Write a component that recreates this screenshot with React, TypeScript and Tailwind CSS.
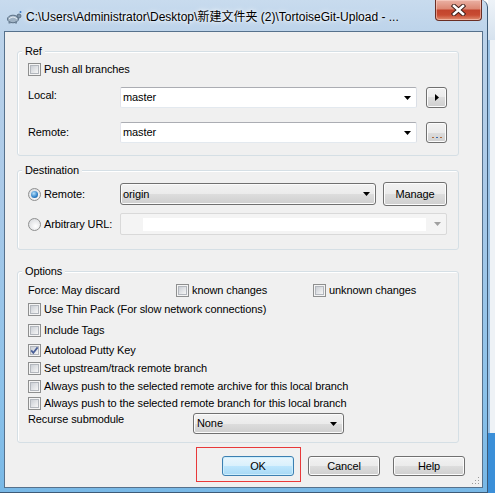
import React from "react";

function CheckBox({ checked }: { checked?: boolean }) {
  return (
    <span className="relative flex h-[13px] w-[13px] shrink-0 items-center justify-center border border-[#8e8f8f] bg-[#f4f4f4]">
      <span className="h-[9px] w-[9px] border border-[#b3b7bd] bg-[linear-gradient(135deg,#cbcfd5,#f6f6f6)]" />
      {checked && (
        <svg className="absolute left-0 top-0" width="11" height="11" viewBox="0 0 11 11">
          <path d="M2.2 5.4 L4.3 7.8 L8.6 2.4" fill="none" stroke="#4a5f97" strokeWidth="1.7" />
        </svg>
      )}
    </span>
  );
}

function Radio({ checked }: { checked?: boolean }) {
  return (
    <span className="flex h-[13px] w-[13px] shrink-0 items-center justify-center rounded-full border border-[#8e8f8f] bg-[radial-gradient(circle_at_60%_65%,#ffffff,#d2d4d8)]">
      {checked && (
        <span className="h-[7px] w-[7px] rounded-full bg-[radial-gradient(circle_at_40%_35%,#b8e2fb,#2d7fc7_60%,#1c4f88)]" />
      )}
    </span>
  );
}

function Arrow({ color = "#000" }: { color?: string }) {
  return (
    <svg width="7" height="4" viewBox="0 0 7 4">
      <polygon points="0,0 7,0 3.5,4" fill={color} />
    </svg>
  );
}

function Button({ children, className = "" }: { children?: React.ReactNode; className?: string }) {
  return (
    <div
      className={
        "flex shrink-0 items-center justify-center rounded-[3px] border border-[#707070] bg-[linear-gradient(#f2f2f2,#ebebeb_50%,#dddddd_50%,#cfcfcf)] shadow-[inset_0_0_0_1px_#fcfcfc] " +
        className
      }
    >
      {children}
    </div>
  );
}

function Legend({ children }: { children: React.ReactNode }) {
  return (
    <span className="absolute -top-[7px] left-[4px] bg-[#f0f0f0] px-[3px] leading-[13px]">{children}</span>
  );
}

function CheckRow({ label, checked, className = "" }: { label: string; checked?: boolean; className?: string }) {
  return (
    <div className={"flex h-[16px] items-center " + className}>
      <CheckBox checked={checked} />
      <span className="ml-[3px] whitespace-nowrap">{label}</span>
    </div>
  );
}

export default function App() {
  return (
    <div className="flex h-[495px] w-[495px] flex-col overflow-hidden bg-white font-['Liberation_Sans',Arial,'Noto_Sans_CJK_SC',sans-serif] text-[11px] leading-[13px] tracking-[-0.1px] text-black">
      <div className="flex h-[493px]">
        {/* window */}
        <div className="relative flex h-[493px] w-[488px] shrink-0 flex-col rounded-tr-[7px] border-b border-r border-[#3d5b78] bg-[linear-gradient(180deg,#c8dbee_0%,#bcd3ea_7%,#a9c9e8_40%,#8cc2ea_80%,#78b8e6_100%)]">
          {/* title bar */}
          <div className="flex h-[31px] shrink-0">
            <div className="ml-[6px] mt-[10px] h-[15px] w-[16px]">
              <svg width="16" height="15" viewBox="0 0 16 15">
                <ellipse cx="7" cy="9" rx="5.5" ry="3.8" fill="#9fb2c4" stroke="#5a6f84" strokeWidth="1" />
                <path d="M3 9 Q7 5 11 9" fill="none" stroke="#e8eef4" strokeWidth="1" />
                <circle cx="13" cy="6" r="2" fill="#7e93a8" stroke="#4f6479" strokeWidth="0.8" />
                <rect x="2.5" y="11.5" width="2" height="2" fill="#6d8297" />
                <rect x="9" y="11.5" width="2" height="2" fill="#6d8297" />
                <circle cx="14.5" cy="2" r="1" fill="#3e7cc4" />
              </svg>
            </div>
            <div className="ml-[4px] mt-[9px] whitespace-nowrap text-[12px] leading-[16px] tracking-normal text-black [text-shadow:0_0_6px_#ffffff,0_0_3px_#ffffff]">
              C:\Users\Administrator\Desktop\新建文件夹 (2)\TortoiseGit-Upload - ...
            </div>
            <div className="ml-auto mr-[5px] flex h-[21px] w-[47px] items-center justify-center rounded-b-[4px] border border-t-0 border-[#6a2e24] bg-[linear-gradient(180deg,#eab1a4_0%,#dc8773_45%,#c2442d_50%,#c84b32_75%,#e08d70_100%)] shadow-[inset_0_0_0_1px_rgba(255,220,210,0.5)]">
              <svg width="15" height="12" viewBox="0 0 15 12">
                <path d="M3 2 L12 10 M12 2 L3 10" stroke="#3b1c17" strokeWidth="4.4" strokeLinecap="square" />
                <path d="M3 2 L12 10 M12 2 L3 10" stroke="#ffffff" strokeWidth="2.6" strokeLinecap="square" />
              </svg>
            </div>
          </div>

          {/* client */}
          <div className="relative ml-[4px] flex h-[457px] w-[479px] flex-col border border-[#56718c] bg-[#f0f0f0]">
            {/* Ref */}
            <div className="relative ml-[12px] mt-[19px] flex h-[105px] w-[442px] shrink-0 flex-col rounded-[3px] border border-[#d5dfe5] pl-[10px] pt-[11px] shadow-[inset_1px_1px_0_#ffffff]">
              <Legend>Ref</Legend>
              <div className="flex h-[13px] items-center">
                <CheckBox />
                <span className="ml-[3px]">Push all branches</span>
              </div>
              <div className="mt-[11px] flex h-[21px] items-center">
                <span className="w-[92px] pb-[4px]">Local:</span>
                <div className="flex h-[21px] w-[297px] items-center rounded-[2px] border border-[#abadb3] border-b-[#e3e9ef] border-l-[#e2e3ea] border-r-[#dbdfe6] bg-white pl-[2px]">
                  <span>master</span>
                  <span className="ml-auto mr-[5px] flex items-center">
                    <Arrow />
                  </span>
                </div>
                <Button className="ml-[9px] h-[21px] w-[21px]">
                  <svg width="4" height="7" viewBox="0 0 4 7">
                    <polygon points="0,0 4,3.5 0,7" fill="#000" />
                  </svg>
                </Button>
              </div>
              <div className="mt-[14px] flex h-[21px] items-center">
                <span className="w-[92px]">Remote:</span>
                <div className="flex h-[21px] w-[297px] items-center rounded-[2px] border border-[#abadb3] border-b-[#e3e9ef] border-l-[#e2e3ea] border-r-[#dbdfe6] bg-white pl-[2px]">
                  <span>master</span>
                  <span className="ml-auto mr-[5px] flex items-center">
                    <Arrow />
                  </span>
                </div>
                <Button className="ml-[9px] h-[21px] w-[21px] items-end pb-[4px]">
                  <span className="flex gap-[2px]">
                    <span className="h-[1px] w-[2px] bg-[#b06a3a]" />
                    <span className="h-[1px] w-[2px] bg-[#3a6ab0]" />
                    <span className="h-[1px] w-[2px] bg-[#b06a3a]" />
                  </span>
                </Button>
              </div>
            </div>

            {/* Destination */}
            <div className="relative ml-[12px] mt-[14px] flex h-[80px] w-[442px] shrink-0 flex-col rounded-[3px] border border-[#d5dfe5] pl-[10px] pt-[11px] shadow-[inset_1px_1px_0_#ffffff]">
              <Legend>Destination</Legend>
              <div className="flex h-[24px] items-center">
                <div className="flex w-[92px] items-center">
                  <Radio checked />
                  <span className="ml-[3px]">Remote:</span>
                </div>
                <div className="flex h-[22px] w-[256px] items-center rounded-[3px] border border-[#707070] bg-[linear-gradient(#f2f2f2,#ebebeb_50%,#dddddd_50%,#cfcfcf)] pl-[2px] shadow-[inset_0_0_0_1px_#fbfbfb]">
                  <span>origin</span>
                  <span className="ml-auto mr-[5px] flex items-center">
                    <Arrow />
                  </span>
                </div>
                <Button className="ml-[7px] h-[24px] w-[64px]">Manage</Button>
              </div>
              <div className="mt-[7px] flex h-[22px] items-center">
                <div className="flex w-[92px] items-center">
                  <Radio />
                  <span className="ml-[3px]">Arbitrary URL:</span>
                </div>
                <div className="flex h-[22px] w-[327px] items-center rounded-[2px] border border-[#d9d9d9] bg-[#f4f4f4]">
                  <span className="ml-[22px] h-[13px] w-[283px] bg-white" />
                  <span className="ml-auto mr-[5px] flex items-center">
                    <Arrow color="#a0a0a0" />
                  </span>
                </div>
              </div>
            </div>

            {/* Options */}
            <div className="relative ml-[12px] mt-[21px] flex h-[172px] w-[442px] shrink-0 flex-col rounded-[3px] border border-[#d5dfe5] pl-[10px] pt-[10px] shadow-[inset_1px_1px_0_#ffffff]">
              <Legend>Options</Legend>
              <div className="flex h-[16px] items-center">
                <span className="w-[148px]">Force: May discard</span>
                <div className="flex w-[137px] items-center">
                  <CheckBox />
                  <span className="ml-[3px]">known changes</span>
                </div>
                <div className="flex items-center">
                  <CheckBox />
                  <span className="ml-[3px]">unknown changes</span>
                </div>
              </div>
              <CheckRow className="mt-[3px]" label="Use Thin Pack (For slow network connections)" />
              <CheckRow className="mt-[5px]" label="Include Tags" />
              <CheckRow className="mt-[4px]" label="Autoload Putty Key" checked />
              <CheckRow className="mt-[2px]" label="Set upstream/track remote branch" />
              <CheckRow className="mt-[2px]" label="Always push to the selected remote archive for this local branch" />
              <CheckRow className="mt-[1px]" label="Always push to the selected remote branch for this local branch" />
              <div className="mt-[2px] flex h-[21px] items-start">
                <span className="w-[165px]">Recurse submodule</span>
                <div className="flex h-[21px] w-[151px] items-center rounded-[3px] border border-[#707070] bg-[linear-gradient(#f2f2f2,#ebebeb_50%,#dddddd_50%,#cfcfcf)] pl-[3px] shadow-[inset_0_0_0_1px_#fbfbfb]">
                  <span>None</span>
                  <span className="ml-auto mr-[6px] flex items-center">
                    <Arrow />
                  </span>
                </div>
              </div>
            </div>

            {/* Buttons */}
            <div className="mt-[13px] flex h-[20px]">
              <div className="relative ml-[217px]">
                <div className="flex h-[20px] w-[72px] items-center justify-center rounded-[3px] border border-[#3c7fb1] bg-[linear-gradient(#eaf6fd,#d9f0fc_50%,#bee6fd_50%,#a7d9f5)] shadow-[inset_0_0_0_1px_#cdeefd]">
                  OK
                </div>
                <span className="absolute -left-[26px] -top-[9px] h-[35px] w-[105px] border border-[#e8393a]" />
              </div>
              <Button className="ml-[14px] h-[20px] w-[72px]">Cancel</Button>
              <Button className="ml-[13px] h-[20px] w-[72px]">Help</Button>
            </div>

            {/* size grip */}
            <svg className="absolute bottom-[2px] right-[2px]" width="10" height="10" viewBox="0 0 10 10">
              <rect x="8" y="2" width="1" height="1" fill="#9a9a9a" />
              <rect x="5" y="5" width="1" height="1" fill="#9a9a9a" />
              <rect x="8" y="5" width="1" height="1" fill="#9a9a9a" />
              <rect x="2" y="8" width="1" height="1" fill="#9a9a9a" />
              <rect x="5" y="8" width="1" height="1" fill="#9a9a9a" />
              <rect x="8" y="8" width="1" height="1" fill="#9a9a9a" />
            </svg>
          </div>
        </div>
        {/* background behind window */}
        <div className="flex flex-1 flex-col bg-[#dfe9f4]">
          <div className="h-[40px] bg-[linear-gradient(#eef3f8,#d6e2ee)]" />
          <div className="flex flex-1">
            <div className="w-[2px] bg-[#9cc3e6]" />
            <div className="flex-1 bg-[#eef2f6]" />
          </div>
          <div className="h-[60px] bg-[#3b8fd8]" />
        </div>
      </div>
      <div className="flex-1 bg-white" />
    </div>
  );
}
